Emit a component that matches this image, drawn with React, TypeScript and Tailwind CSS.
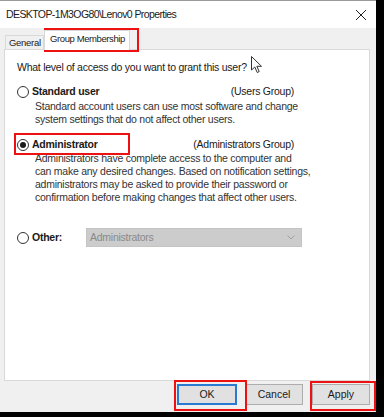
import React from 'react';

function Radio({ checked }: { checked?: boolean }) {
  return (
    <span className="flex h-[12px] w-[12px] shrink-0 items-center justify-center rounded-full border border-[#333333] bg-white">
      {checked && <span className="h-[6px] w-[6px] rounded-full bg-[#1a1a1a]" />}
    </span>
  );
}

export default function App() {
  return (
    <div
      className="relative h-[417px] w-[384px] overflow-hidden bg-black text-[#1a1a1a]"
      style={{ fontFamily: '"Liberation Sans", Arial, sans-serif' }}
    >
      <div className="flex h-[412px] w-[376px] flex-col bg-[#f0f0f0]">
        {/* title bar */}
        <div className="flex h-[28px] shrink-0 items-center justify-between border-t border-[#9a9a9a] bg-white pl-[6px] pr-[8px]">
          <span className="text-[10.5px] tracking-[-0.6px]">DESKTOP-1M3OG80\Lenov0 Properties</span>
          <svg width="12" height="12" viewBox="0 0 12 12" className="mr-[1px]">
            <path d="M1 1 L11 11 M11 1 L1 11" stroke="#222" strokeWidth="1" />
          </svg>
        </div>

        {/* tabs */}
        <div className="flex h-[21px] shrink-0 items-end pl-[5px]">
          <div className="mb-[-1px] flex h-[15px] w-[39px] items-center border border-b-0 border-[#d9d9d9] bg-[#f0f0f0] pl-[3px] text-[9.5px] tracking-[-0.3px] text-[#222]">
            General
          </div>
          <div className="relative z-10 mb-[-1px] flex h-[20px] w-[86px] items-center border border-b-0 border-[#d9d9d9] bg-white pb-[2px] pl-[5px] text-[9.5px] tracking-[-0.4px]">
            Group Membership
          </div>
        </div>

        {/* panel */}
        <div className="mx-[4px] flex h-[332px] w-[366px] shrink-0 flex-col border border-[#d9d9d9] bg-white pl-[12px] pt-[10px] text-[10.5px] tracking-[-0.25px]">
          <div className="leading-[14px]">What level of access do you want to grant this user?</div>

          <div className="mt-[11px] flex h-[14px] items-center">
            <Radio />
            <span className="ml-[3px] font-bold">Standard user</span>
            <span className="ml-auto mr-[75px]">(Users Group)</span>
          </div>
          <div className="ml-[18px] mt-[1px] leading-[12.5px] text-[#333]">
            Standard account users can use most software and change
            <br />
            system settings that do not affect other users.
          </div>

          <div className="mt-[13px] flex h-[14px] items-center">
            <Radio checked />
            <span className="ml-[3px] font-bold">Administrator</span>
            <span className="ml-auto mr-[75px]">(Administrators Group)</span>
          </div>
          <div className="ml-[18px] leading-[13px] text-[#333]">
            Administrators have complete access to the computer and
            <br />
            can make any desired changes. Based on notification settings,
            <br />
            administrators may be asked to provide their password or
            <br />
            confirmation before making changes that affect other users.
          </div>

          <div className="mt-[24px] flex h-[19px] items-center">
            <Radio />
            <span className="ml-[3px] w-[54px] font-bold">Other:</span>
            <div className="flex h-[19px] w-[216px] items-center justify-between border border-[#c4c4c4] bg-[#cccccc] pl-[3px] pr-[6px] text-[#8a8a8a]">
              <span>Administrators</span>
              <svg width="8" height="5" viewBox="0 0 8 5">
                <path d="M0.5 0.5 L4 4 L7.5 0.5" fill="none" stroke="#a0a0a0" strokeWidth="1" />
              </svg>
            </div>
          </div>
        </div>

        {/* buttons */}
        <div className="mt-[3px] flex justify-end pr-[6px] text-[10.5px]">
          <button className="flex h-[21px] w-[60px] items-center justify-center border-2 border-[#2a7ad1] bg-[#e1e1e1]">OK</button>
          <button className="ml-[8px] flex h-[21px] w-[58px] items-center justify-center border border-[#adadad] bg-[#e1e1e1]">Cancel</button>
          <button className="ml-[9px] flex h-[21px] w-[58px] items-center justify-center border border-[#adadad] bg-[#e1e1e1]">Apply</button>
        </div>
      </div>

      {/* annotation boxes */}
      <div className="pointer-events-none absolute left-[44px] top-[28px] h-[24px] w-[95px] border-2 border-[#ee1111]" />
      <div className="pointer-events-none absolute left-[14px] top-[133px] h-[22px] w-[116px] border-2 border-[#ee1111]" />
      <div className="pointer-events-none absolute left-[174px] top-[380px] h-[31px] w-[73px] border-2 border-[#ee1111]" />
      <div className="pointer-events-none absolute left-[310px] top-[381px] h-[30px] w-[66px] border-2 border-[#ee1111]" />

      {/* mouse cursor */}
      <svg className="absolute left-[251px] top-[56px]" width="12" height="18" viewBox="0 0 12 18">
        <path d="M0.5 0.5 L0.5 14 L3.8 11 L6.2 16.5 L8.2 15.6 L5.9 10.3 L10.5 10.3 Z" fill="white" stroke="#333" strokeWidth="1" />
      </svg>
    </div>
  );
}
